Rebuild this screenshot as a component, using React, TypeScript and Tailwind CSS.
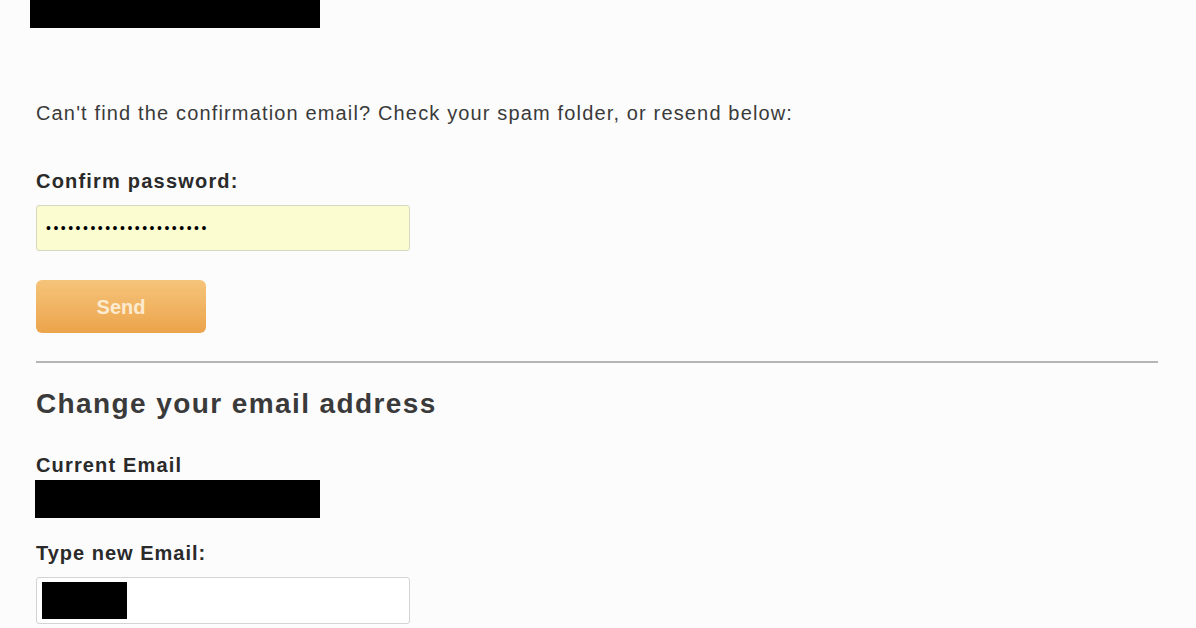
export default function App() {
  return (
    <div
      className="w-[1196px] h-[628px] overflow-hidden bg-[#fcfcfc] text-[#333]"
      style={{ fontFamily: '"Liberation Sans", Arial, sans-serif' }}
    >
      <div className="pl-[36px] pr-[38px]">
        {/* redacted username */}
        <div className="-ml-[6px] h-[28px] w-[290px] bg-black" />

        <p className="mt-[72px] text-[20px] leading-[26px] tracking-[1.15px] text-[#3a3a3a]">
          Can&apos;t find the confirmation email? Check your spam folder, or resend below:
        </p>

        <label className="mt-[43px] block text-[20px] font-bold leading-[24px] tracking-[1.2px] text-[#2a2a2a]">
          Confirm password:
        </label>
        <div className="mt-[12px] flex h-[46px] w-[374px] items-center rounded-[3px] border border-[#d8d8c0] bg-[#fbfdd0] px-[9px] text-[14px] tracking-[2.5px] text-black">
          ••••••••••••••••••••••
        </div>

        <button className="mt-[29px] h-[53px] w-[170px] rounded-[6px] bg-gradient-to-b from-[#f5c47a] to-[#eca44a] text-[20px] font-bold text-[#fcebd0]">
          Send
        </button>

        <hr className="mt-[28px] border-t-2 border-[#b5b5b5]" />

        <h2 className="mt-[23px] text-[28px] font-bold leading-[36px] tracking-[1.4px] text-[#3a3a3a]">
          Change your email address
        </h2>

        <div className="mt-[31px] text-[20px] font-bold leading-[24px] tracking-[1.15px] text-[#2a2a2a]">
          Current Email
        </div>
        <div className="mt-[3px] -ml-px h-[38px] w-[285px] bg-black" />

        <label className="mt-[23px] block text-[20px] font-bold leading-[24px] tracking-[1px] text-[#2a2a2a]">
          Type new Email:
        </label>
        <div className="mt-[12px] flex h-[47px] w-[374px] items-center rounded-[3px] border border-[#d4d4d4] bg-white px-[5px]">
          <div className="h-[37px] w-[85px] bg-black" />
        </div>
      </div>
    </div>
  );
}
